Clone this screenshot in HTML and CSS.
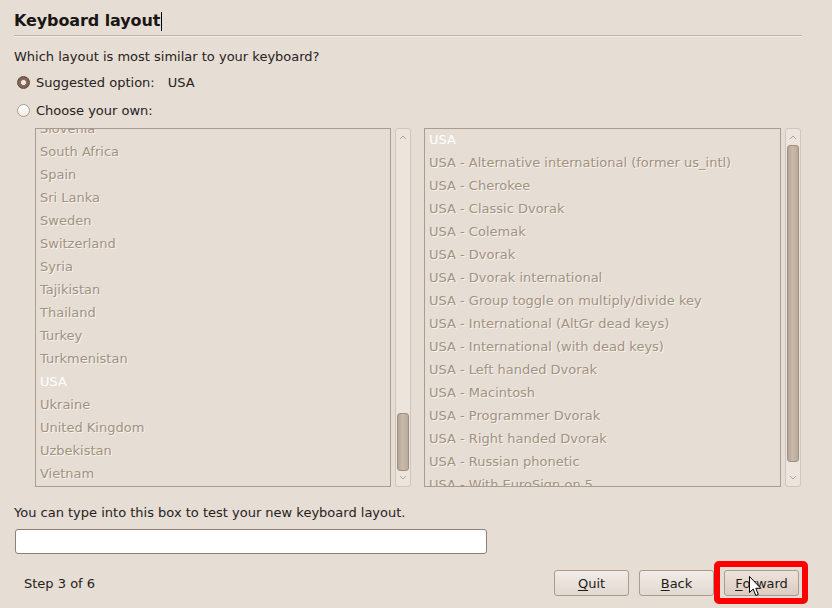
FILE: index.html
```html
<!DOCTYPE html>
<html>
<head>
<meta charset="utf-8">
<link rel="stylesheet" href="styles.css">
</head>
<body>
<div class="page">
  <h1 class="title">Keyboard layout<span class="caret"></span></h1>
  <div class="sep"></div>
  <div class="question">Which layout is most similar to your keyboard?</div>
  <div class="radio-row first">
    <span class="radio checked"></span>
    <span class="rlabel">Suggested option:</span><span class="suggest">USA</span>
  </div>
  <div class="radio-row second">
    <span class="radio"></span>
    <span class="rlabel">Choose your own:</span>
  </div>
  <div class="lists">
    <div class="list left-list">
      <div class="rows shifted">
        <div class="row">Slovenia</div>
        <div class="row">South Africa</div>
        <div class="row">Spain</div>
        <div class="row">Sri Lanka</div>
        <div class="row">Sweden</div>
        <div class="row">Switzerland</div>
        <div class="row">Syria</div>
        <div class="row">Tajikistan</div>
        <div class="row">Thailand</div>
        <div class="row">Turkey</div>
        <div class="row">Turkmenistan</div>
        <div class="row sel">USA</div>
        <div class="row">Ukraine</div>
        <div class="row">United Kingdom</div>
        <div class="row">Uzbekistan</div>
        <div class="row">Vietnam</div>
      </div>
    </div>
    <div class="sb">
      <svg class="arrow" width="8" height="5" viewBox="0 0 8 5"><polyline points="1,4 4,1 7,4" fill="none" stroke="#b1a599" stroke-width="1"/></svg>
      <div class="thumb thumb-left"></div>
      <svg class="arrow down" width="8" height="5" viewBox="0 0 8 5"><polyline points="1,1 4,4 7,1" fill="none" stroke="#b1a599" stroke-width="1"/></svg>
    </div>
    <div class="list right-list">
      <div class="rows">
        <div class="row sel">USA</div>
        <div class="row">USA - Alternative international (former us_intl)</div>
        <div class="row">USA - Cherokee</div>
        <div class="row">USA - Classic Dvorak</div>
        <div class="row">USA - Colemak</div>
        <div class="row">USA - Dvorak</div>
        <div class="row">USA - Dvorak international</div>
        <div class="row">USA - Group toggle on multiply/divide key</div>
        <div class="row">USA - International (AltGr dead keys)</div>
        <div class="row">USA - International (with dead keys)</div>
        <div class="row">USA - Left handed Dvorak</div>
        <div class="row">USA - Macintosh</div>
        <div class="row">USA - Programmer Dvorak</div>
        <div class="row">USA - Right handed Dvorak</div>
        <div class="row">USA - Russian phonetic</div>
        <div class="row">USA - With EuroSign on 5</div>
      </div>
    </div>
    <div class="sb">
      <svg class="arrow" width="8" height="5" viewBox="0 0 8 5"><polyline points="1,4 4,1 7,4" fill="none" stroke="#b1a599" stroke-width="1"/></svg>
      <div class="thumb thumb-right"></div>
      <svg class="arrow down" width="8" height="5" viewBox="0 0 8 5"><polyline points="1,1 4,4 7,1" fill="none" stroke="#b1a599" stroke-width="1"/></svg>
    </div>
  </div>
  <div class="test-label">You can type into this box to test your new keyboard layout.</div>
  <div class="test-input"></div>
  <div class="footer">
    <span class="step">Step 3 of 6</span>
    <div class="buttons">
      <div class="btn"><u>Q</u>uit</div>
      <div class="btn"><u>B</u>ack</div>
      <div class="btn fwd"><u>F</u>orward
        <span class="highlight"></span>
        <svg class="pointer" width="13" height="21" viewBox="0 0 13 21"><path d="M0.5,0.5 L0.5,16.5 L4.2,13 L6.8,19.5 L9.3,18.5 L6.8,12.3 L11.8,12.3 Z" fill="#fff" stroke="#000" stroke-width="1" stroke-linejoin="round"/></svg>
      </div>
    </div>
  </div>
</div>
</body>
</html>
```
FILE: styles.css
```css
* { box-sizing: border-box; }
html, body { margin: 0; padding: 0; }
body {
  background: #e6ddd4;
  font-family: "DejaVu Sans", sans-serif;
  font-size: 13px;
  color: #28221d;
  width: 832px;
  height: 608px;
  overflow: hidden;
}
.page { padding: 10px 30px 0 14px; }
.title {
  margin: 0;
  font-size: 16px;
  font-weight: bold;
  line-height: 22px;
  height: 22px;
  display: flex;
  align-items: center;
  color: #1a1613;
  letter-spacing: -0.1px;
}
.caret { display: inline-block; width: 1px; height: 19px; background: #000; margin-left: 1px; }
.sep {
  margin-top: 3px;
  height: 2px;
  border-top: 1px solid #bcb2a7;
  border-bottom: 1px solid #f4efea;
}
.question { margin-top: 11px; line-height: 18px; height: 18px; }
.radio-row { display: flex; align-items: center; height: 22px; padding-left: 3px; }
.radio-row.first { margin-top: 5px; }
.radio-row.second { margin-top: 6px; }
.radio {
  width: 13px; height: 13px; border-radius: 50%;
  border: 1px solid #a89d92;
  background: linear-gradient(#ffffff, #f1ece7);
  margin-right: 6px;
  flex: none;
}
.radio.checked {
  border-color: #5e4a3e;
  background: radial-gradient(circle at 50% 50%, #f0e4dc 0 2.2px, #8a6e5e 2.8px, #6b5244 100%);
}
.suggest { margin-left: 13px; }
.lists { display: flex; margin-top: 7px; margin-left: 21px; height: 359px; }
.list {
  border: 1px solid #ab9d8e;
  overflow: hidden;
  flex: none;
}
.left-list { width: 356px; }
.right-list { width: 357px; margin-left: 13px; }
.rows.shifted { margin-top: -11px; }
.row {
  height: 23px;
  line-height: 21px;
  padding-left: 4px;
  white-space: nowrap;
  color: #a29280;
  text-shadow: 1px 1px 0 #f7f3ef;
}
.row.sel { color: #ffffff; text-shadow: none; }
.sb {
  width: 16px;
  margin-left: 4px;
  flex: none;
  border: 1px solid #d0c6bb;
  border-radius: 3px;
  background: #ebe5de;
  display: flex;
  flex-direction: column;
  align-items: center;
  padding: 1px 0;
}
.arrow { display: block; margin-top: 5px; flex: none; }
.arrow.down { margin-top: auto; margin-bottom: 5px; }
.thumb {
  width: 12px;
  border: 1px solid #9e8f80;
  border-radius: 3px;
  background: linear-gradient(to right, #b4a595, #c8baab 45%, #b9aa9a);
  flex: none;
}
.thumb-left { margin-top: 273px; height: 58px; }
.thumb-right { margin-top: 5px; height: 317px; }
.test-label { margin-top: 17px; line-height: 18px; height: 18px; }
.test-input {
  margin-top: 7px;
  margin-left: 1px;
  width: 472px;
  height: 25px;
  background: #fff;
  border: 1px solid #8d8074;
  border-radius: 3px;
}
.footer { margin-top: 16px; display: flex; align-items: center; height: 26px; }
.step { padding-left: 10px; }
.buttons { margin-left: auto; margin-right: 3px; display: flex; gap: 10px; }
.btn {
  width: 75px;
  height: 26px;
  border: 1px solid #a99c8f;
  border-radius: 3px;
  background: linear-gradient(#f1ece7, #e2d9d0);
  display: flex;
  align-items: center;
  justify-content: center;
  color: #231d19;
}
.btn u { text-underline-offset: 2px; }
.fwd { position: relative; background: linear-gradient(#ede3dc, #dccbc0); }
.highlight {
  position: absolute;
  left: -11px; top: -10px; right: -10px; bottom: -9px;
  border: 6px solid #ff0000;
  border-radius: 5px;
}
.pointer { position: absolute; left: 24px; top: 5px; }
```
